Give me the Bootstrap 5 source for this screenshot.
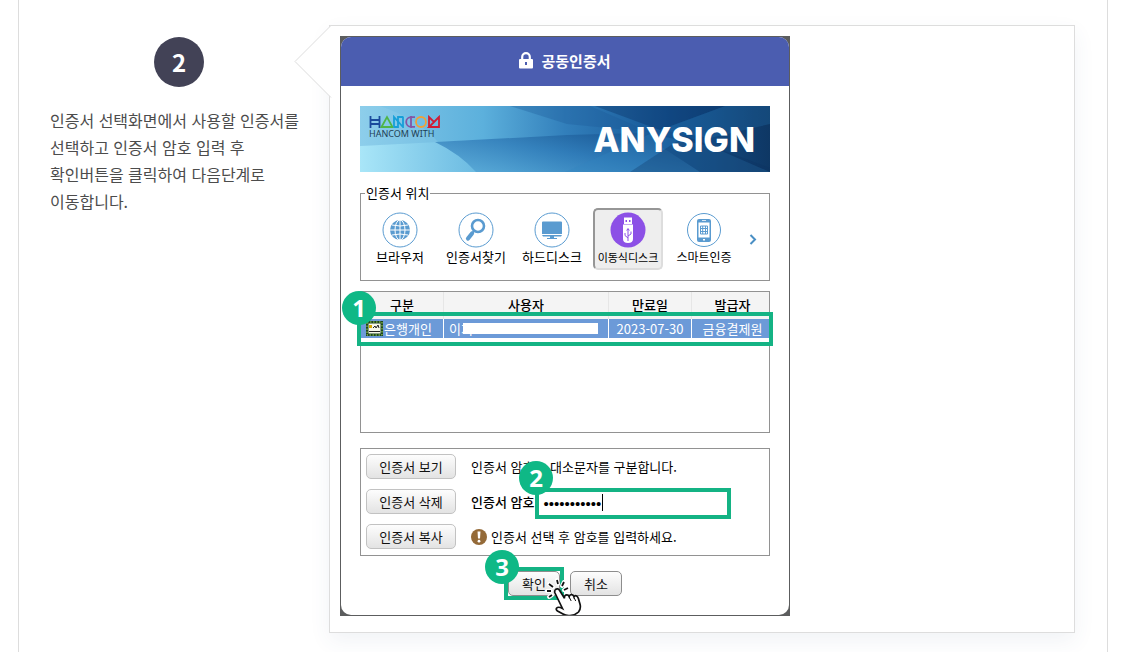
<!DOCTYPE html>
<html lang="ko">
<head>
<meta charset="utf-8">
<meta name="viewport" content="width=device-width, initial-scale=1">
<title>공동인증서 로그인 안내</title>
<link href="https://cdn.jsdelivr.net/npm/bootstrap@5.3.0/dist/css/bootstrap.min.css" rel="stylesheet">
<style>
body{font-family:"Noto Sans CJK KR",sans-serif;color:#000}
.guide{margin:0 15px 0 18px;padding:25px 32px 19px 31px;border:solid #ddd;border-width:0 1px}
.step-side{flex:0 0 258px;margin-right:21px;padding-top:12px}
.step-no{width:50px;height:50px;background:#424256;color:#fff;font-size:24px;font-weight:700}
.step-text{margin-top:20px;font-size:16px;line-height:27px;color:#4c4c4c;word-break:keep-all}
.shot{border:1px solid #ddd;padding:10px 10px 16px;box-shadow:0 8px 20px rgba(60,80,130,.07)}
.shot-arrow{left:-36px;top:-1px}
.cert{max-width:450px;background:#5c5d5e;padding:1px;font-size:13px;line-height:18px}
.cert-in{border-radius:10px}
.cert-head{height:49px;padding-bottom:2px;background:#4b5db0;color:#fff;font-size:15px;font-weight:700;gap:8px}
.cert-body{padding:20px 19px 19px}
.banner{height:66px;padding:9px 15px 0 9px}
.brand-sub{font-size:9px;line-height:12px;font-family:"Noto Sans",sans-serif;color:#1f3e54}
.brand-main{font-family:Inter,sans-serif;font-weight:800;font-size:34px;line-height:50px}
.frame{border:1px solid #929292}
.place{margin-top:13px;padding:7px 4px 10px}
.place legend{float:none;width:auto;margin:0;padding:0 1px;font-size:13px;line-height:16px}
.place-list{gap:6px}
.place-item{width:70px;height:62px;padding:0 0 1px;border:2px solid transparent;border-radius:5px;background:none;color:#000;white-space:nowrap;font-size:13px;line-height:18px}
.place-item svg{display:block;margin:0 auto}
.place-item span{display:block}
.place-item.active{background:#eee;border-color:#969696 #ddd #ddd #969696}
.place-item.active span{font-size:11px}
.place-item .label-tight{font-size:12px}
.certs{margin-top:10px;height:142px}
.cert-table{table-layout:fixed;border-collapse:separate;border-spacing:0}
.cert-table th{height:27px;padding:0 0 2px;background:#f4f4f4;font-weight:500;border-right:1px solid #e6e6e6;text-align:center}
.cert-table td{height:19px;padding:0;background:#6c9ad8;color:#fff;line-height:19px;border-right:1px solid #fff;text-align:center;white-space:nowrap}
.cert-table tr>:last-child{border-right:0;padding-left:4px}
.cert-table td.who,.cert-table td.kind{text-align:left;padding-left:5px}
.kind svg{margin-right:1px}
.c-a,.c-c{width:83px}.c-b{width:165px}.c-d{width:77px}
.veil{left:14px;width:135px;top:4px;height:11px}
.mark-no{width:34px;height:34px;border-radius:50%;background:#0fb886;color:#fff;font:700 24px/34px "Noto Sans",sans-serif;text-align:center;z-index:2}
.mark-box{border:4px solid #14b384;z-index:1;pointer-events:none}
.mark-row{left:-4px;right:-4px;top:20px;height:34px}
.ok-box{inset:-4px}
.no-row{left:-19px;top:-1px}
.no-pass{left:158px;top:12px}
.no-ok{left:-23px;top:-21px}
.pass{margin-top:15px;padding:5px 5px 6px;gap:10px}
.pass-line{height:25px;gap:15px}
.soft-btn{flex:none;width:90px;height:25px;padding:0;font-size:13px;line-height:18px;color:#111;background:linear-gradient(#fdfdfd,#e3e3e3);border:1px solid #c2c2c2;border-radius:5px}
.foot{margin-top:15px;gap:10px}
.foot .soft-btn{width:52px;border-color:#8d8d8d}
.pw-wrap{margin:4px 33px 0 -14px}
.pw{width:100%;height:31px;border:4px solid #14b384;border-radius:0;padding:0 4px;font-family:"Liberation Sans",sans-serif;font-size:15px;color:#000;outline:0;background:#fff}
.caret{left:67px;top:6px;width:1px;height:17px;background:#000}
.hand{left:35px;top:6px;z-index:3}
.warn{gap:4px}
</style>
</head>
<body>
<main class="guide d-flex align-items-start min-vh-100">
  <section class="step-side">
    <div class="step-no rounded-circle d-flex align-items-center justify-content-center mx-auto">2</div>
    <p class="step-text mb-0">인증서 선택화면에서 사용할 인증서를 선택하고 인증서 암호 입력 후 확인버튼을 클릭하여 다음단계로 이동합니다.</p>
  </section>
  <section class="shot position-relative flex-grow-1 bg-white">
    <svg class="shot-arrow position-absolute" width="38" height="74" aria-hidden="true"><path d="M37 .5 1 36.500 37 72.500" fill="#fff" stroke="#ddd"/></svg>
    <div class="cert">
      <div class="cert-in bg-white overflow-hidden">
        <div class="cert-head d-flex align-items-center justify-content-center">
          <svg width="14" height="17" viewBox="0 0 14 17" aria-hidden="true"><path d="M3.200 8V5a3.800 3.800 0 0 1 7.600 0v3" fill="none" stroke="#fff" stroke-width="2.200"/><rect y="7" width="14" height="9.500" rx="1" fill="#fff"/><path d="M6 10h2v3H6z" fill="#4b5db0"/></svg>
          <span>공동인증서</span>
        </div>
        <div class="cert-body">
          <div class="banner position-relative overflow-hidden d-flex justify-content-between">
            <svg class="position-absolute top-0 start-0 w-100 h-100" viewBox="0 0 410 66" preserveAspectRatio="none" aria-hidden="true">
              <defs>
                <linearGradient id="sky"><stop offset="0" stop-color="#86cbea"/><stop offset=".3" stop-color="#5cb0dc"/><stop offset=".5" stop-color="#327fbb"/><stop offset=".75" stop-color="#155594"/><stop offset="1" stop-color="#0e3764"/></linearGradient>
                <linearGradient id="low" x1="0" x2="1"><stop offset="0" stop-color="#a9e6f8"/><stop offset=".6" stop-color="#62b4de" stop-opacity=".8"/><stop offset="1" stop-color="#2a78b8" stop-opacity="0"/></linearGradient>
                <linearGradient id="deep" x1="0" y1="1" x2="1" y2="0"><stop offset="0" stop-color="#58aad8"/><stop offset=".5" stop-color="#2f7bb8"/><stop offset="1" stop-color="#124a86"/></linearGradient>
              </defs>
              <rect width="410" height="66" fill="url(#sky)"/>
              <path d="M0 40 210 29 235 66H0z" fill="url(#low)"/>
              <path d="M75 36 207 29 280 27 340 66H116Q100 48 75 36z" fill="url(#deep)" opacity=".8"/>
              <path d="M20 0Q60 14 78 36L0 40V0z" fill="#a8dcf2" opacity=".2"/>
              <path d="M150 0 207 18 290 26 230 0z" fill="#1a5594" opacity=".3"/>
              <path d="M235 0 300 24 365 0z" fill="#0a2f62" opacity=".35"/>
              <path d="M300 24 365 0H410V18L350 32z" fill="#2470ac" opacity=".3"/>
              <path d="M205 66 290 28 350 40 410 66z" fill="#3285c0" opacity=".3"/>
              <path d="M325 30 410 62V66H270z" fill="#0c315f" opacity=".3"/>
            </svg>
            <div class="position-relative">
              <svg class="d-block" width="72" height="13" viewBox="0 0 72 13" fill="none" stroke-width="1.800" role="img" aria-label="HANCOM"><path d="M1.500 1v12M10.500 1v12M1 5h10M1 9h10" stroke="#1a4b9c"/><path d="M12.500 12 18 2l5.500 10z" stroke="#4fb548"/><path d="M25 12.500V2l9 10V1.500M25 12h4V2h5" stroke="#169fd8"/><path d="M46 2.200h-4a4.800 4.800 0 0 0 0 9.600h4M42 1v12" stroke="#8455a5"/><circle cx="52" cy="7" r="5" stroke="#f0a038"/><path d="M60 12.500V2l5 5 5-5v10H60l10-10" stroke="#d01c35"/></svg>
              <div class="brand-sub">HANCOM WITH</div>
            </div>
            <div class="brand-main position-relative text-white">ANYSIGN</div>
          </div>

          <fieldset class="place frame">
            <legend>인증서 위치</legend>
            <div class="place-list d-flex align-items-center">
              <button type="button" class="place-item"><svg width="36" height="36" viewBox="0 0 36 36" fill="none" stroke="#5a9bd0"><circle cx="18" cy="18" r="17"/><circle cx="18" cy="18" r="10" fill="#5a9bd0" stroke="none"/><g stroke="#fff"><ellipse cx="18" cy="18" rx="5" ry="10"/><path d="M18 8v20M8 18h20M10 13q8 2 16 0M10 23q8-2 16 0"/></g></svg><span>브라우저</span></button>
              <button type="button" class="place-item"><svg width="36" height="36" viewBox="0 0 36 36" fill="none" stroke="#5a9bd0"><circle cx="18" cy="18" r="17"/><circle cx="20" cy="14" r="6" stroke-width="2.600"/><path d="m16 19-2.500 3" stroke-width="2"/><path d="m14 21.500-4 5" stroke-width="4.200" stroke-linecap="round"/></svg><span>인증서찾기</span></button>
              <button type="button" class="place-item"><svg width="36" height="36" viewBox="0 0 36 36" fill="none"><circle cx="18" cy="18" r="17" stroke="#5a9bd0"/><path d="M9 9.500h18q1 0 1 1V22H8V10.500q0-1 1-1zM8 23h20l-1 1.500H9zM16 24.500h4V26h3v1H13v-1h3z" fill="#5a9bd0"/></svg><span>하드디스크</span></button>
              <button type="button" class="place-item active" aria-pressed="true"><svg width="36" height="36" viewBox="0 0 36 36" fill="none"><circle cx="18" cy="18" r="17.500" fill="#8c50e6"/><path d="M14 5.500h8V12h-8zM13 12.500h10V27q0 4-5 4t-5-4z" fill="#fff"/><path d="M15.500 8h1.500v2h-1.500zM19 8h1.500v2H19z" fill="#8c50e6"/><path d="M18 17v12M18 26l-3-2.500V21M18 24l3-2v-2.500M16.700 18.500 18 16.500l1.300 2" stroke="#8c50e6"/></svg><span>이동식디스크</span></button>
              <button type="button" class="place-item"><svg width="36" height="36" viewBox="0 0 36 36" fill="none"><circle cx="18" cy="18" r="16.500" stroke="#5a9bd0"/><rect x="11" y="7" width="14" height="23" rx="2" fill="#5a9bd0"/><path d="M12.500 10.500h11v15h-11zM16 8.300h4v.8h-4zM17 27h2v1.600h-2z" fill="#fff"/><path d="M14.500 14h7v8h-7zM14 16.500h8M14 19.500h8M16.700 14v8M19.500 14v8" stroke="#5a9bd0"/></svg><span class="label-tight">스마트인증</span></button>
              <a href="#" aria-label="다음"><svg class="d-block ms-1" width="8" height="11" viewBox="0 0 8 11"><path d="m1.500 1 4.500 4.500L1.500 10" fill="none" stroke="#4a8fc4" stroke-width="2"/></svg></a>
            </div>
          </fieldset>

          <div class="certs frame position-relative">
            <table class="cert-table w-100">
              <colgroup><col class="c-a"><col class="c-b"><col class="c-c"><col class="c-d"></colgroup>
              <thead><tr><th>구분</th><th>사용자</th><th>만료일</th><th>발급자</th></tr></thead>
              <tbody><tr>
                <td class="kind"><div class="d-flex align-items-center"><svg width="17" height="15" viewBox="0 0 17 15" aria-hidden="true"><rect width="17" height="15" fill="#1d4422"/><rect x="1" y="1" width="15" height="13" fill="#1d4422" stroke="#a3d94c" stroke-dasharray="1.500"/><path d="M2.500 2.500h12v10h-12z" fill="#f5f7e8"/><path d="M3 4h3v3H3z" fill="#d4a900"/><path d="M7 7l2-2 1 2 2-3 1 3M3 10.500h11" stroke="#222" fill="none"/></svg>은행개인</div></td>
                <td class="who"><div class="position-relative">이지<span class="veil position-absolute bg-white"></span></div></td>
                <td>2023-07-30</td><td>금융결제원</td>
              </tr></tbody>
            </table>
            <span class="mark-box mark-row position-absolute"></span>
            <span class="mark-no no-row position-absolute">1</span>
          </div>

          <form class="pass frame position-relative d-flex flex-column">
            <div class="pass-line d-flex align-items-center"><button type="button" class="btn soft-btn">인증서 보기</button><span>인증서 암호는 대소문자를 구분합니다.</span></div>
            <div class="pass-line d-flex align-items-center"><button type="button" class="btn soft-btn">인증서 삭제</button><label for="pw" class="fw-medium text-nowrap">인증서 암호</label>
              <div class="pw-wrap position-relative flex-grow-1"><input id="pw" class="pw d-block" type="password" value="hancom12345"><span class="caret position-absolute"></span></div></div>
            <div class="pass-line d-flex align-items-center"><button type="button" class="btn soft-btn">인증서 복사</button><span class="warn d-flex align-items-center"><svg width="16" height="16" viewBox="0 0 16 16" aria-hidden="true"><circle cx="8" cy="8" r="8" fill="#946a38"/><path d="M6.500 2.500h3L9 9.500H7z" fill="#fff"/><circle cx="8" cy="12.200" r="1.400" fill="#fff"/></svg>인증서 선택 후 암호를 입력하세요.</span></div>
            <span class="mark-no no-pass position-absolute">2</span>
          </form>

          <div class="foot d-flex justify-content-center">
            <div class="position-relative"><button type="button" class="btn soft-btn d-block">확인</button>
              <span class="mark-box position-absolute ok-box"></span>
              <span class="mark-no no-ok position-absolute">3</span>
              <svg class="hand position-absolute" width="42" height="40" viewBox="0 0 42 40" aria-hidden="true"><g stroke="#fff" stroke-width="4" stroke-linecap="round"><path d="m6 7 4 3M14 3l1 4M21 5l-2 4M4 14h4M25 11l-4 2M6 20l3-2"/></g><g stroke="#111" stroke-width="1.800"><path d="m6 7 4 3M14 3l1 4M21 5l-2 4M4 14h4M25 11l-4 2M6 20l3-2"/></g><path d="M12.500 12.500q2.200-1.700 4 .8l5 8q-.4-3.500 2.400-3.500 1.600 0 2.300 1.800.6-2.300 2.600-1.900 1.700.3 2.200 2.200 1-1.700 2.600-.9 1.200.6 1.800 2.500l1.700 6q1 4-1.600 7.500-3 3-8.500 3.500-4 .4-7-1.500l-5.500-3q-2-1.500-.8-3 1.500-1.700 5.800.5l-7.500-15.500q-.8-2.300.5-3.500z" fill="#fff" stroke="#111" stroke-width="1.700"/><path d="m26.200 20 2 4M31 20.500l1.700 3.500" stroke="#111"/></svg>
            </div>
            <button type="button" class="btn soft-btn">취소</button>
          </div>
        </div>
      </div>
    </div>
  </section>
</main>
<script src="https://cdn.jsdelivr.net/npm/bootstrap@5.3.0/dist/js/bootstrap.bundle.min.js"></script>
</body>
</html>
